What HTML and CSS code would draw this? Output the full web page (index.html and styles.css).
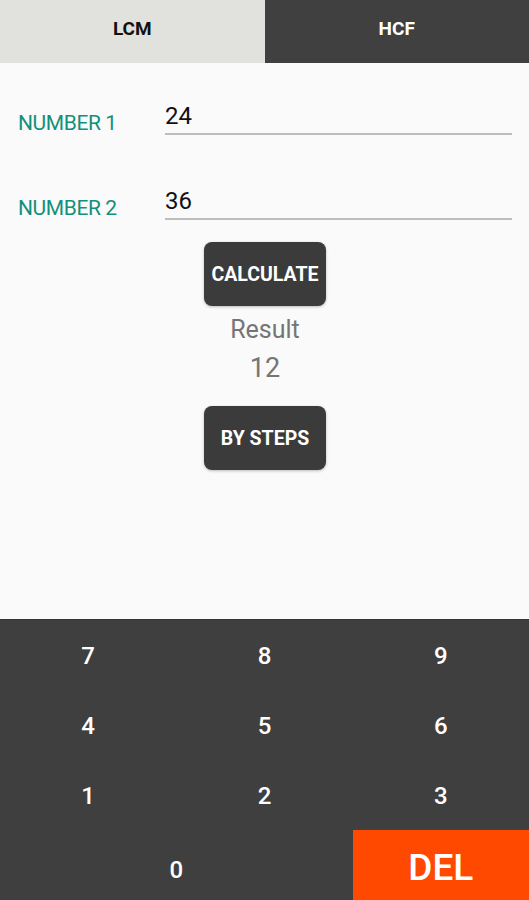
FILE: index.html
```html
<!DOCTYPE html>
<html lang="en">
<head>
<meta charset="utf-8">
<meta name="viewport" content="width=529, initial-scale=1">
<title>LCM HCF</title>
<link rel="stylesheet" href="styles.css">
</head>
<body>
<div class="app">
<div class="tabs">
<div class="tab on">LCM</div>
<div class="tab">HCF</div>
</div>
<div class="main">
<div class="row">
<span class="lbl">NUMBER 1</span>
<div class="field">24</div>
</div>
<div class="row">
<span class="lbl">NUMBER 2</span>
<div class="field">36</div>
</div>
<div class="act">
<button class="btn">CALCULATE</button>
<div class="res">Result</div>
<div class="val">12</div>
<button class="btn steps">BY STEPS</button>
</div>
</div>
<div class="pad">
<div class="key">7</div><div class="key">8</div><div class="key">9</div>
<div class="key">4</div><div class="key">5</div><div class="key">6</div>
<div class="key">1</div><div class="key">2</div><div class="key">3</div>
<div class="key zero">0</div><div class="key del">DEL</div>
</div>
</div>
</body>
</html>
```

FILE: styles.css
```css
*{box-sizing:border-box;margin:0;padding:0;}
body{font-family:Roboto,"Liberation Sans",sans-serif;background:#fafafa;}
.app{display:flex;flex-direction:column;height:900px;}
.tabs{display:flex;height:63px;}
.tab{flex:1;display:flex;align-items:center;justify-content:center;padding-bottom:6px;background:#404040;color:#fff;font-weight:bold;font-size:19px;}
.tab.on{background:#e1e2de;color:#111;}
.main{flex:1;padding:0 17px 0 18px;}
.row{display:flex;align-items:flex-end;height:85px;}
.row:first-child{height:72px;}
.lbl{width:147px;color:#13907c;font-size:21px;letter-spacing:-0.4px;margin-bottom:0;}
.field{flex:1;font-size:24px;color:#111;padding:0 0 4px 0;border-bottom:2px solid #bdbdbd;line-height:26px;}
.act{display:flex;flex-direction:column;align-items:center;padding-top:22px;}
.btn{width:122px;height:64px;background:#3b3b3b;color:#fff;border:0;border-radius:8px;font-family:Roboto,"Liberation Sans",sans-serif;font-weight:bold;font-size:19.5px;box-shadow:0 1px 3px rgba(0,0,0,0.25);}
.res{margin-top:10px;color:#757575;font-size:25px;line-height:28px;}
.val{margin-top:9px;color:#757575;font-size:27px;line-height:30px;}
.btn.steps{margin-top:23px;}
.pad{height:281px;background:#3f3f3f;display:grid;grid-template-columns:repeat(3,1fr);grid-template-rows:repeat(4,1fr);border-top:1px solid #333;}
.key{display:flex;align-items:center;justify-content:center;color:#fff;font-size:24px;font-weight:500;padding-top:2px;}
.key.zero{grid-column:span 2;padding-top:10px;}
.key.del{background:#ff4800;font-size:37px;padding-top:4px;}
```
